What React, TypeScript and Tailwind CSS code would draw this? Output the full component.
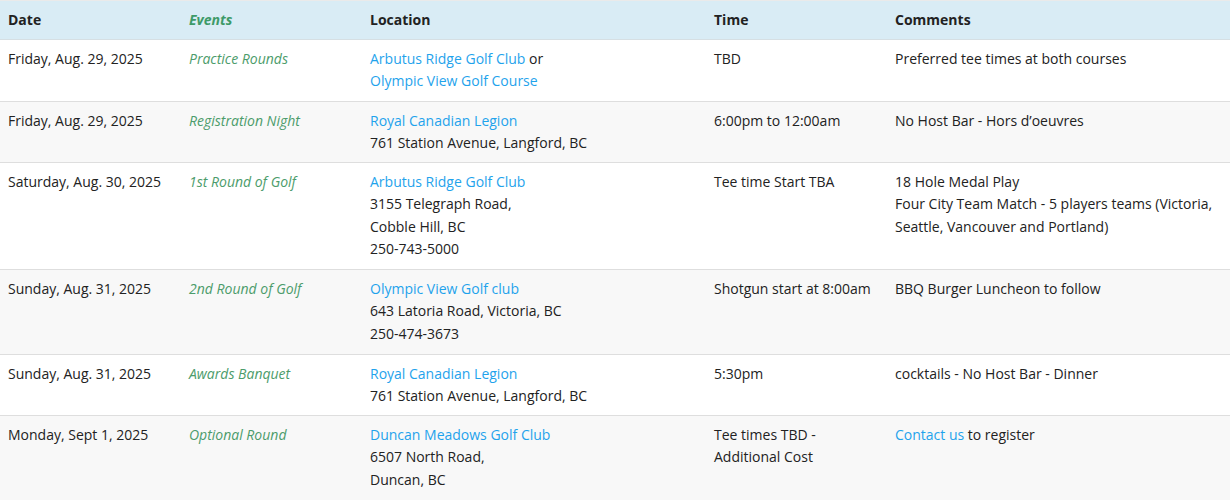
import React from "react";

const L = ({ children }: { children: React.ReactNode }) => (
  <span className="text-[#1fa3ec]">{children}</span>
);

type Row = {
  date: string;
  event: string;
  loc: React.ReactNode;
  time: React.ReactNode;
  comments: React.ReactNode;
  h: string;
  bg: string;
};

const rows: Row[] = [
  {
    date: "Friday, Aug. 29, 2025",
    event: "Practice Rounds",
    loc: (
      <>
        <L>Arbutus Ridge Golf Club</L> or
        <br />
        <L>Olympic View Golf Course</L>
      </>
    ),
    time: "TBD",
    comments: "Preferred tee times at both courses",
    h: "h-[62px]",
    bg: "bg-white",
  },
  {
    date: "Friday, Aug. 29, 2025",
    event: "Registration Night",
    loc: (
      <>
        <L>Royal Canadian Legion</L>
        <br />
        761 Station Avenue, Langford, BC
      </>
    ),
    time: "6:00pm to 12:00am",
    comments: "No Host Bar - Hors d’oeuvres",
    h: "h-[61px]",
    bg: "bg-[#f8f8f8]",
  },
  {
    date: "Saturday, Aug. 30, 2025",
    event: "1st Round of Golf",
    loc: (
      <>
        <L>Arbutus Ridge Golf Club</L>
        <br />
        3155 Telegraph Road,
        <br />
        Cobble Hill, BC
        <br />
        250-743-5000
      </>
    ),
    time: "Tee time Start TBA",
    comments: (
      <>
        18 Hole Medal Play
        <br />
        Four City Team Match - 5 players teams (Victoria, Seattle, Vancouver and Portland)
      </>
    ),
    h: "h-[107px]",
    bg: "bg-white",
  },
  {
    date: "Sunday, Aug. 31, 2025",
    event: "2nd Round of Golf",
    loc: (
      <>
        <L>Olympic View Golf club</L>
        <br />
        643 Latoria Road, Victoria, BC
        <br />
        250-474-3673
      </>
    ),
    time: "Shotgun start at 8:00am",
    comments: "BBQ Burger Luncheon to follow",
    h: "h-[85px]",
    bg: "bg-[#f8f8f8]",
  },
  {
    date: "Sunday, Aug. 31, 2025",
    event: "Awards Banquet",
    loc: (
      <>
        <L>Royal Canadian Legion</L>
        <br />
        761 Station Avenue, Langford, BC
      </>
    ),
    time: "5:30pm",
    comments: "cocktails - No Host Bar - Dinner",
    h: "h-[61px]",
    bg: "bg-white",
  },
  {
    date: "Monday, Sept 1, 2025",
    event: "Optional Round",
    loc: (
      <>
        <L>Duncan Meadows Golf Club</L>
        <br />
        6507 North Road,
        <br />
        Duncan, BC
      </>
    ),
    time: (
      <>
        Tee times TBD -<br />
        Additional Cost
      </>
    ),
    comments: (
      <>
        <L>Contact us</L> to register
      </>
    ),
    h: "h-[85px]",
    bg: "bg-[#f8f8f8]",
  },
];

const cols = "grid grid-cols-[181px_181px_344px_181px_343px]";

export default function App() {
  return (
    <div
      className="w-[1230px] bg-white text-[#222] text-[14px] leading-[22.4px]"
      style={{ fontFamily: '"Open Sans", "Liberation Sans", sans-serif' }}
    >
      <div
        className={`${cols} h-[40px] bg-[#d9ecf5] border-t border-t-[#eaeaea] border-b border-b-[#d6dfe3] font-bold items-center`}
      >
        <div className="px-2">Date</div>
        <div className="px-2 italic text-[#3d9a68]">Events</div>
        <div className="px-2">Location</div>
        <div className="px-2">Time</div>
        <div className="px-2">Comments</div>
      </div>
      {rows.map((r, i) => (
        <div key={i} className={`${cols} ${r.h} ${r.bg} border-b border-[#dedede]`}>
          <div className="px-2 pt-2">{r.date}</div>
          <div className="px-2 pt-2 italic text-[#4c9c6b]">{r.event}</div>
          <div className="px-2 pt-2">{r.loc}</div>
          <div className="px-2 pt-2">{r.time}</div>
          <div className="px-2 pt-2">{r.comments}</div>
        </div>
      ))}
    </div>
  );
}
